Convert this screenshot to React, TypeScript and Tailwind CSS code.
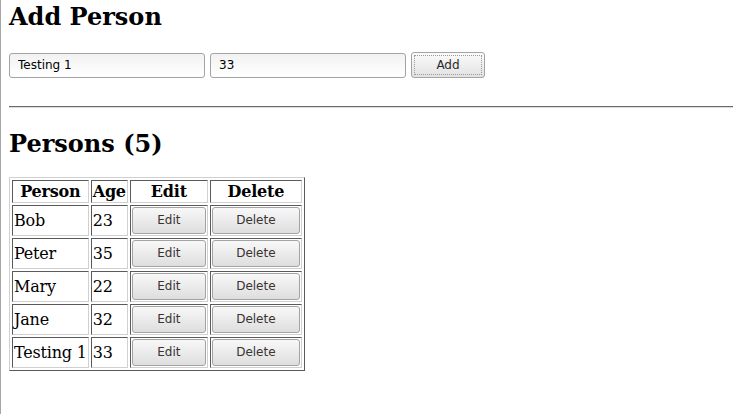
import { useState } from 'react';

type Person = { name: string; age: number };

const initial: Person[] = [
  { name: 'Bob', age: 23 },
  { name: 'Peter', age: 35 },
  { name: 'Mary', age: 22 },
  { name: 'Jane', age: 32 },
  { name: 'Testing 1', age: 33 },
];

const serif = "font-['DejaVu_Serif',serif]";
const sans = "font-['DejaVu_Sans',sans-serif]";
const cell = 'border border-t-[#5a5a5a] border-l-[#5a5a5a] border-r-[#d0d0d0] border-b-[#d0d0d0] p-px';

function GrayButton({ label, width }: { label: string; width: string }) {
  return (
    <button
      className={`${sans} ${width} h-[27px] rounded-[3px] border border-[#a3a3a3] bg-gradient-to-b from-[#f8f8f8] to-[#dedede] text-[12px] tracking-normal text-[#3a3431]`}
    >
      {label}
    </button>
  );
}

export default function App() {
  const [persons] = useState<Person[]>(initial);
  const [name, setName] = useState('Testing 1');
  const [age, setAge] = useState('33');

  return (
    <div className={`${serif} min-h-screen border-l border-[#a6a6a6] bg-white pl-2 text-black`}>
      <h1 className="pt-[2px] text-[24px] font-bold leading-[30px]">Add Person</h1>

      <div className="mt-[20px] flex items-center gap-[5px]">
        <input
          value={name}
          onChange={(e) => setName(e.target.value)}
          className={`${sans} h-[25px] w-[196px] rounded-[3px] border border-[#a3a3a3] bg-gradient-to-b from-[#f2f2f2] to-white pl-2 text-[12px] text-black outline-none`}
        />
        <input
          value={age}
          onChange={(e) => setAge(e.target.value)}
          className={`${sans} h-[25px] w-[196px] rounded-[3px] border border-[#a3a3a3] bg-gradient-to-b from-[#f2f2f2] to-white pl-2 text-[12px] text-black outline-none`}
        />
        <button
          className={`${sans} flex h-[26px] w-[74px] items-center justify-center rounded-[3px] border border-[#a3a3a3] bg-gradient-to-b from-[#fbfbfb] to-[#e2e2e2] p-[2px] text-[12px] text-[#2b2b2b]`}
        >
          <span className="flex h-full w-full items-center justify-center border border-dotted border-[#9a9a9a]">Add</span>
        </button>
      </div>

      <hr className="mt-[28px] border-t border-b border-t-[#6b6b6b] border-b-[#dcdcdc]" />

      <h2 className="mt-[21px] text-[24px] font-bold leading-[30px]">Persons ({persons.length})</h2>

      <table className="mt-[18px] border-separate border-spacing-[2px] border border-t-[#d0d0d0] border-l-[#d0d0d0] border-r-[#5a5a5a] border-b-[#5a5a5a] text-[16px] leading-[19px] tracking-[-0.2px]">
        <thead>
          <tr>
            {['Person', 'Age', 'Edit', 'Delete'].map((h) => (
              <th key={h} className={`${cell} text-center font-bold`}>
                {h}
              </th>
            ))}
          </tr>
        </thead>
        <tbody>
          {persons.map((p) => (
            <tr key={p.name}>
              <td className={cell}>{p.name}</td>
              <td className={cell}>{p.age}</td>
              <td className={cell}>
                <GrayButton label="Edit" width="w-[74px]" />
              </td>
              <td className={cell}>
                <GrayButton label="Delete" width="w-[88px]" />
              </td>
            </tr>
          ))}
        </tbody>
      </table>
    </div>
  );
}
